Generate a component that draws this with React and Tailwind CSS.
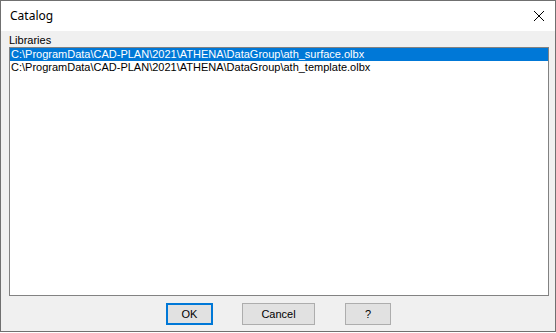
import React from "react";

export default function App() {
  const btn =
    "h-[22px] flex items-center justify-center text-[11px] text-black bg-[#e1e1e1] border";
  return (
    <div className="w-[556px] h-[333px] bg-white" style={{ fontFamily: '"Liberation Sans", Arial, sans-serif' }}>
      <div className="w-[556px] h-[332px] border border-[#707070] flex flex-col bg-[#f0f0f0]">
        <div className="h-[30px] bg-white flex items-center justify-between pl-[9px] pr-[9px] shrink-0">
          <span className="text-[12px] text-black" style={{ fontFamily: '"Noto Sans", "Open Sans", sans-serif' }}>
            Catalog
          </span>
          <svg width="12" height="12" viewBox="0 0 12 12" className="mr-[1px]">
            <path d="M1 1 L11 11 M11 1 L1 11" stroke="#000" strokeWidth="1" fill="none" />
          </svg>
        </div>
        <div className="flex-1 flex flex-col pl-[8px] pr-[6px] pb-[6px]">
          <div className="mt-[3px] h-[13px] text-[11px] leading-[13px] text-black">Libraries</div>
          <div className="h-[249px] border border-[#828282] bg-white flex flex-col">
            <div className="h-[13px] leading-[13px] text-[11px] bg-[#0078d7] text-white pl-[1px]">
              C:\ProgramData\CAD-PLAN\2021\ATHENA\DataGroup\ath_surface.olbx
            </div>
            <div className="h-[13px] leading-[13px] text-[11px] text-black pl-[1px]">
              C:\ProgramData\CAD-PLAN\2021\ATHENA\DataGroup\ath_template.olbx
            </div>
          </div>
          <div className="mt-[7px] flex justify-center pr-[1px]">
            <div className={btn + " w-[47px] border-2 border-[#0078d7]"}>OK</div>
            <div className={btn + " w-[73px] ml-[29px] border-[#adadad]"}>Cancel</div>
            <div className={btn + " w-[46px] ml-[30px] border-[#adadad]"}>?</div>
          </div>
        </div>
      </div>
    </div>
  );
}
